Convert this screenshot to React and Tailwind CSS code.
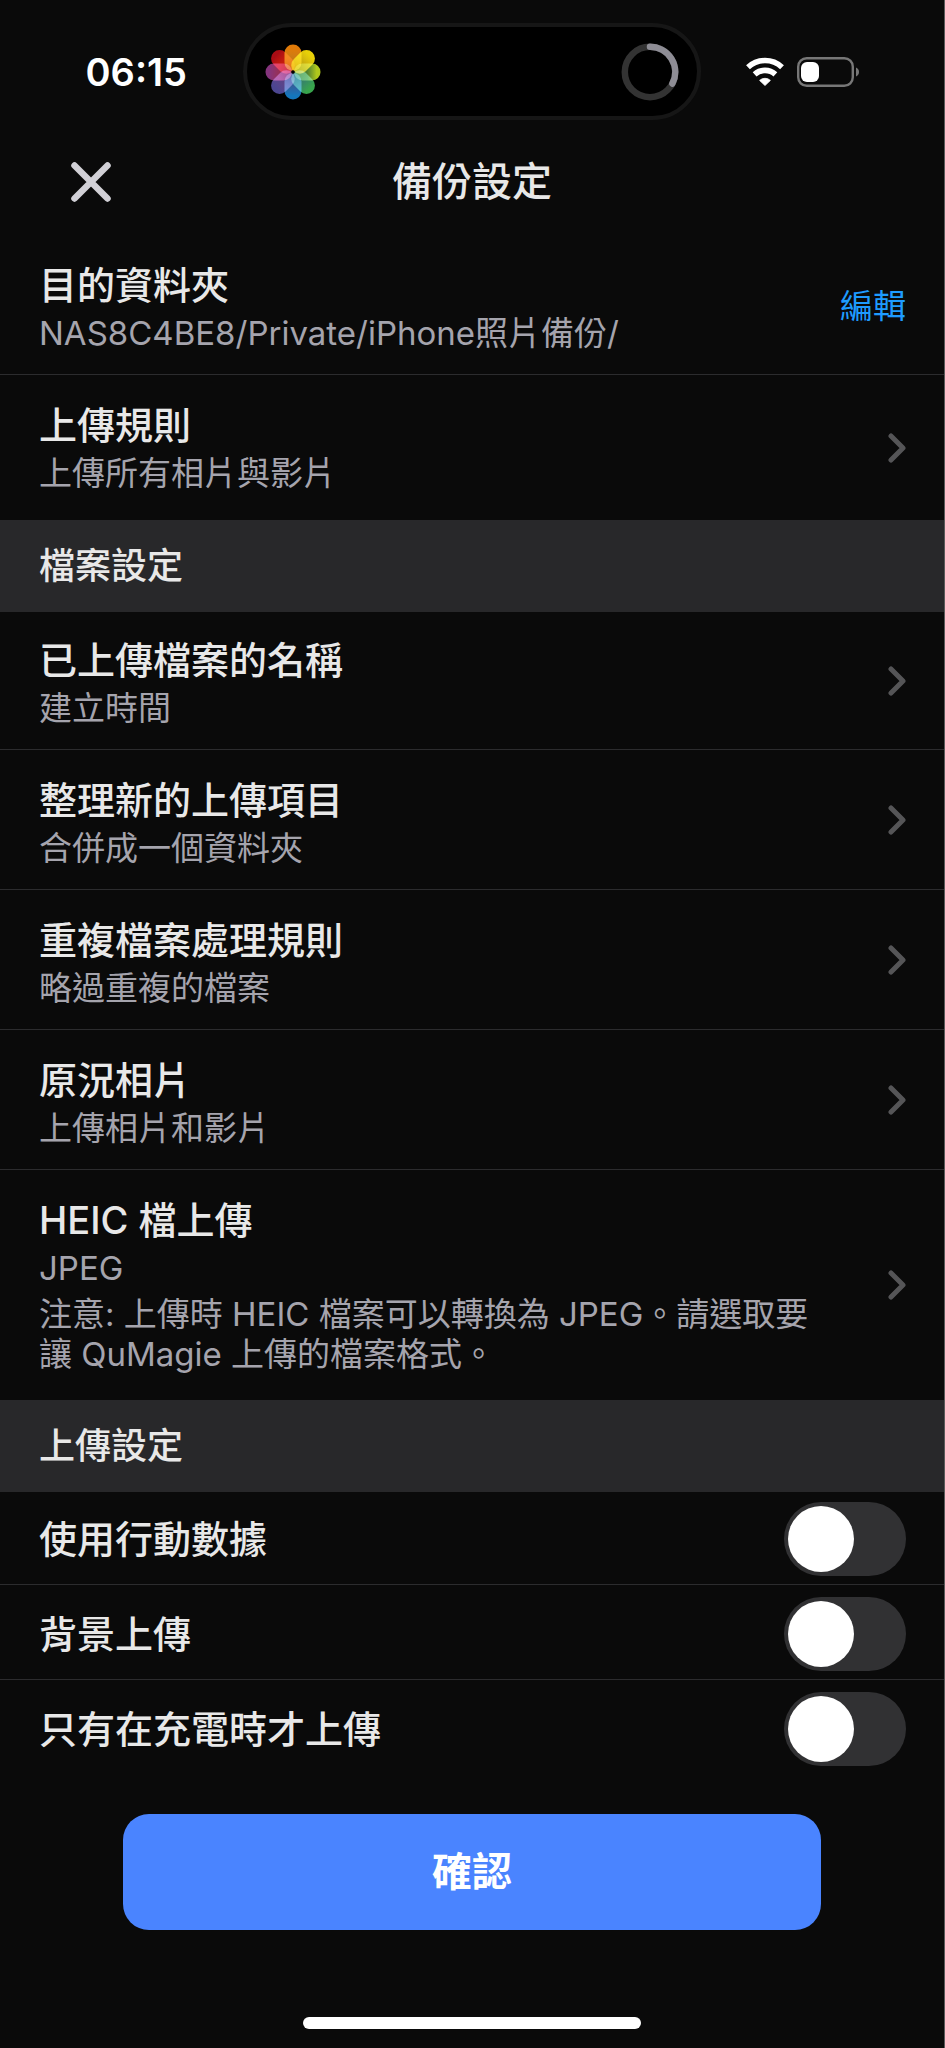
import { useState } from 'react'
import clsx from 'clsx'

const FILE_ROWS = [
  { id: 'name', title: '已上傳檔案的名稱', value: '建立時間' },
  { id: 'organize', title: '整理新的上傳項目', value: '合併成一個資料夾' },
  { id: 'duplicate', title: '重複檔案處理規則', value: '略過重複的檔案' },
  { id: 'live', title: '原況相片', value: '上傳相片和影片' },
  {
    id: 'heic',
    title: 'HEIC 檔上傳',
    value: 'JPEG',
    note: '注意: 上傳時 HEIC 檔案可以轉換為 JPEG。請選取要讓 QuMagie 上傳的檔案格式。',
  },
]

const UPLOAD_SWITCHES = [
  { id: 'cellular', label: '使用行動數據' },
  { id: 'background', label: '背景上傳' },
  { id: 'charging', label: '只有在充電時才上傳' },
]

// Petals clockwise from the top: [inner colour, outer colour]
const PETALS = [
  ['#f09018', '#e07a08'],
  ['#f0d010', '#e8d008'],
  ['#5f9838', '#b0c81c'],
  ['#3f9c7a', '#38a44c'],
  ['#3a70b8', '#1476bc'],
  ['#6c50a0', '#4c4690'],
  ['#b03868', '#84347c'],
  ['#e82010', '#a80c14'],
]

const PhotosIcon = () => (
  <svg className="size-[56px] isolate" viewBox="-28 -28 56 56" aria-hidden="true">
    <defs>
      {PETALS.map(([inner, outer], i) => (
        <linearGradient key={i} id={`petal-${i}`} x1="0" y1="1" x2="0" y2="0">
          <stop offset="0.1" stopColor={inner} stopOpacity="0.7" />
          <stop offset="0.5" stopColor={inner} stopOpacity="0.85" />
          <stop offset="0.85" stopColor={outer} />
        </linearGradient>
      ))}
    </defs>
    {PETALS.map((_, i) => (
      <rect
        key={i}
        className="mix-blend-screen"
        x="-8.5"
        y="-27.5"
        width="17"
        height="26.5"
        rx="8.5"
        fill={`url(#petal-${i})`}
        transform={`rotate(${i * 45})`}
      />
    ))}
    <circle r="1.8" fill="#000" />
  </svg>
)

const ProgressRing = () => (
  <svg className="size-[58px]" viewBox="0 0 58 58" fill="none" strokeWidth="6.5" aria-hidden="true">
    <circle cx="29" cy="29" r="25.2" stroke="#333333" />
    <path d="M29 3.8A25.2 25.2 0 0 1 51.4 40.6" stroke="#8e8d95" strokeLinecap="round" />
  </svg>
)

const WifiIcon = () => (
  <svg className="w-[40px] h-[30px]" viewBox="0 0 40 30" fill="none" aria-hidden="true">
    <path d="M3 10.2A25 25 0 0 1 37 10.2" stroke="#fff" strokeWidth="5.6" />
    <path d="M9.6 17.4A15.4 15.4 0 0 1 30.4 17.4" stroke="#fff" strokeWidth="5.6" />
    <path d="M20 28.5L14.6 23.4A8 8 0 0 1 25.4 23.4Z" fill="#fff" stroke="#fff" strokeWidth="0.8" strokeLinejoin="round" />
  </svg>
)

const BatteryIcon = () => (
  <svg className="w-[63px] h-[30px]" viewBox="0 0 63 30" fill="none" aria-hidden="true">
    <rect x="1.2" y="1.2" width="54.6" height="27.6" rx="8.5" stroke="#777777" strokeWidth="2.4" />
    <rect x="4" y="5" width="18" height="20" rx="6" fill="#fff" />
    <path d="M59 10.5C60.8 11.2 62 13 62 15C62 17 60.8 18.8 59 19.5Z" fill="#777777" />
  </svg>
)

const Chevron = () => (
  <svg className="w-[18px] h-[30px] shrink-0" viewBox="0 0 18 30" fill="none" aria-hidden="true">
    <path d="M3 3L15 15L3 27" stroke="#555557" strokeWidth="5" strokeLinecap="round" strokeLinejoin="round" />
  </svg>
)

const StatusBar = () => (
  <div className="grid grid-cols-[1fr_458px_1fr] items-center pt-[23px]">
    <div className="flex justify-end pr-14">
      <time className="text-[38px] leading-[48px] font-semibold text-white">06:15</time>
    </div>
    <div className="h-[97px] flex items-center justify-between rounded-full border-4 border-[#161616] bg-black px-[18px]">
      <PhotosIcon />
      <ProgressRing />
    </div>
    <div className="flex items-center gap-3 pl-11">
      <WifiIcon />
      <BatteryIcon />
    </div>
  </div>
)

const RowText = ({ title, value, note }) => (
  <span className="flex-1 block pt-[26px] pb-[17px] group-first:pt-6 group-last:pb-[23px]">
    <span className="block text-[38px] leading-[48px] font-medium text-[#e8e8e8]">{title}</span>
    <span className="block text-[33px] leading-[48px] text-[#a5a4ad]">{value}</span>
    {note && <span className="block pt-0.5 pb-[3px] text-[33px] leading-[40px] text-[#a5a4ad]">{note}</span>}
  </span>
)

const rowClass =
  'group w-full flex items-center gap-12 pl-[39px] pr-[38px] border-b last:border-b-0 border-[#2c2c2e] text-left'

const LinkRow = ({ title, value, note }) => (
  <button type="button" className={rowClass}>
    <RowText title={title} value={value} note={note} />
    <Chevron />
  </button>
)

const SectionTitle = ({ children }) => (
  <h2 className="flex items-center h-[92px] pl-[39px] pr-[38px] bg-[#28282a] text-[36px] leading-[48px] font-medium text-[#e8e8e8]">
    {children}
  </h2>
)

const SwitchRow = ({ id, label, checked, onChange }) => (
  <label
    htmlFor={id}
    className="flex items-center justify-between pl-[39px] pr-[38px] pt-3 pb-2 first:pt-2.5 border-b last:border-b-0 border-[#2c2c2e]"
  >
    <span className="text-[38px] leading-[48px] font-medium text-[#e8e8e8]">{label}</span>
    <span className={clsx('relative w-[122px] h-[74px] rounded-full', checked ? 'bg-[#34c759]' : 'bg-[#313133]')}>
      <input
        id={id}
        type="checkbox"
        role="switch"
        checked={checked}
        onChange={(e) => onChange(e.target.checked)}
        className="absolute inset-0 size-full appearance-none rounded-full"
      />
      <span
        className={clsx(
          'absolute top-1 size-[66px] rounded-full bg-white pointer-events-none',
          checked ? 'right-1' : 'left-1'
        )}
      />
    </span>
  </label>
)

export default function App() {
  const [switches, setSwitches] = useState({ cellular: false, background: false, charging: false })

  return (
    <div
      lang="zh-Hant"
      className="min-h-screen flex flex-col bg-[#0a0a0a] border-r border-[#5a5a5a] font-['Inter','Noto_Sans_CJK_TC',sans-serif]"
    >
      <StatusBar />

      <header className="grid grid-cols-[1fr_auto_1fr] items-center h-[117px] pt-1.5 px-[71px]">
        <button type="button" aria-label="關閉" className="justify-self-start">
          <svg className="size-10 block" viewBox="0 0 40 40" fill="none">
            <path d="M3.5 3.5L36.5 36.5M36.5 3.5L3.5 36.5" stroke="#d1d0d6" strokeWidth="6.5" strokeLinecap="round" />
          </svg>
        </button>
        <h1 className="text-[40px] leading-[48px] font-medium text-[#e8e8e8]">備份設定</h1>
      </header>

      <main>
        <div>
          <div className={rowClass}>
            <RowText title="目的資料夾" value="NAS8C4BE8/Private/iPhone照片備份/" />
            <button type="button" className="text-[33px] leading-[48px] text-[#1e9bff]">
              編輯
            </button>
          </div>
          <LinkRow title="上傳規則" value="上傳所有相片與影片" />
        </div>

        <SectionTitle>檔案設定</SectionTitle>
        <div>
          {FILE_ROWS.map((row) => (
            <LinkRow key={row.id} title={row.title} value={row.value} note={row.note} />
          ))}
        </div>

        <SectionTitle>上傳設定</SectionTitle>
        <div>
          {UPLOAD_SWITCHES.map(({ id, label }) => (
            <SwitchRow
              key={id}
              id={id}
              label={label}
              checked={switches[id]}
              onChange={(value) => setSwitches((prev) => ({ ...prev, [id]: value }))}
            />
          ))}
        </div>
      </main>

      <div className="px-[13%] pt-10">
        <button
          type="button"
          className="w-full h-[116px] rounded-[26px] bg-[#4a84ff] text-[40px] leading-[48px] font-semibold text-white"
        >
          確認
        </button>
      </div>

      {/* Home indicator */}
      <div className="mt-auto pt-8 pb-[19px] flex justify-center">
        <div className="w-[338px] h-3 rounded-full bg-white" />
      </div>
    </div>
  )
}
